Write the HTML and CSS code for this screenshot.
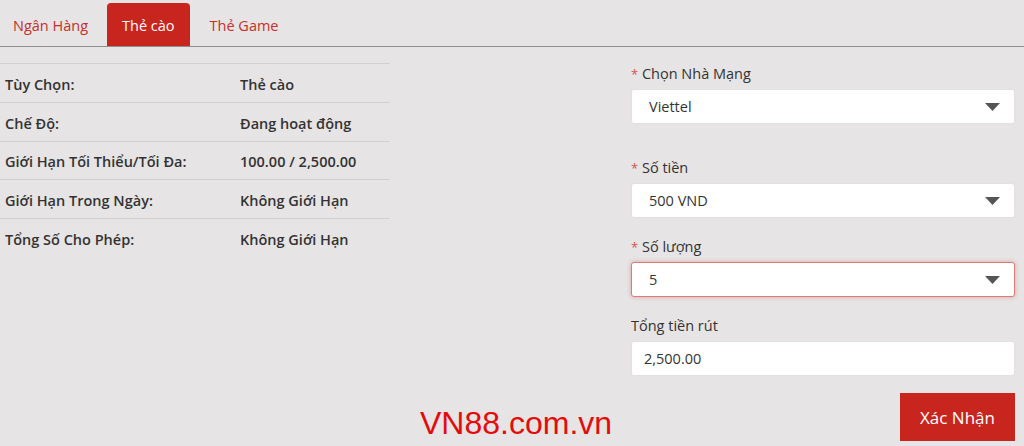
FILE: index.html
```html
<!DOCTYPE html>
<html lang="vi">
<head>
<meta charset="utf-8">
<title>Thẻ cào</title>
<link rel="stylesheet" href="styles.css">
</head>
<body>
<nav class="tabs">
  <a class="tab">Ngân Hàng</a>
  <a class="tab active">Thẻ cào</a>
  <a class="tab">Thẻ Game</a>
</nav>
<main class="content">
  <section class="info">
    <div class="row"><span class="k">Tùy Chọn:</span><span class="v">Thẻ cào</span></div>
    <div class="row"><span class="k">Chế Độ:</span><span class="v">Đang hoạt động</span></div>
    <div class="row"><span class="k">Giới Hạn Tối Thiểu/Tối Đa:</span><span class="v">100.00 / 2,500.00</span></div>
    <div class="row"><span class="k">Giới Hạn Trong Ngày:</span><span class="v">Không Giới Hạn</span></div>
    <div class="row"><span class="k">Tổng Số Cho Phép:</span><span class="v">Không Giới Hạn</span></div>
  </section>
  <section class="form">
    <div class="group g1">
      <label class="label"><span class="req">*</span> Chọn Nhà Mạng</label>
      <div class="select"><span>Viettel</span><svg class="caret" viewBox="0 0 15 8"><path d="M0 0H15L7.5 8Z"/></svg></div>
    </div>
    <div class="group">
      <label class="label"><span class="req">*</span> Số tiền</label>
      <div class="select"><span>500 VND</span><svg class="caret" viewBox="0 0 15 8"><path d="M0 0H15L7.5 8Z"/></svg></div>
    </div>
    <div class="group">
      <label class="label"><span class="req">*</span> Số lượng</label>
      <div class="select focus"><span>5</span><svg class="caret" viewBox="0 0 15 8"><path d="M0 0H15L7.5 8Z"/></svg></div>
    </div>
    <div class="group">
      <label class="label">Tổng tiền rút</label>
      <div class="input">2,500.00</div>
    </div>
    <div class="actions"><button class="btn">Xác Nhận</button></div>
  </section>
</main>
<div class="watermark">VN88.com.vn</div>
</body>
</html>
```
FILE: styles.css
```css
html, body {
  margin: 0;
  padding: 0;
  background: #e6e4e4;
  font-family: "Open Sans", "Noto Sans", sans-serif;
  color: #333;
  height: 446px;
  overflow: hidden;
}
.tabs {
  display: flex;
  padding-top: 3px;
  border-bottom: 1px solid #8e8e8e;
  height: 43px;
}
.tab {
  display: flex;
  align-items: center;
  padding: 2px 15px 0;
  font-size: 14.5px;
  color: #c4302a;
  border-radius: 4px 4px 0 0;
}
.tab:first-child { padding: 2px 19px 0 13px; }
.tab:last-child { padding-left: 20px; }
.tab.active {
  background: #c9251f;
  color: #fff;
}
.content {
  display: flex;
  justify-content: space-between;
  padding: 16px 9px 0 0;
}
.info {
  width: 390px;
}
.row {
  display: flex;
  align-items: center;
  box-sizing: border-box;
  height: 38.75px;
  padding-top: 3px;
  border-top: 1px solid #d2d0d0;
  font-size: 14.5px;
  font-weight: 600;
  color: #333;
}
.k { width: 235px; padding-left: 5px; }
.form {
  width: 384px;
  display: flex;
  flex-direction: column;
}
.group { margin-bottom: 18px; }
.group.g1 { margin-bottom: 33px; }
.label {
  display: block;
  font-size: 14.5px;
  line-height: 20px;
  padding-top: 1px;
  margin-bottom: 5px;
  color: #333;
}
.req { color: #d9534f; font-size: 13px; }
.select, .input {
  box-sizing: border-box;
  height: 35px;
  background: #fff;
  border: 1px solid #e2e0e0;
  border-radius: 3px;
  display: flex;
  align-items: center;
  font-size: 14.5px;
}
.select {
  justify-content: space-between;
  padding: 0 14px 0 17px;
}
.input { padding: 0 12px; }
.select.focus {
  border-color: #dc7b78;
  box-shadow: 0 0 4px rgba(210, 80, 75, 0.45);
}
.caret { width: 15px; height: 8px; fill: #555; }
.actions {
  display: flex;
  justify-content: flex-end;
  margin-top: -1px;
}
.btn {
  width: 115px;
  height: 48px;
  border: 0;
  border-radius: 0;
  background: #c9251f;
  color: #fff;
  font-family: "Open Sans", "Noto Sans", sans-serif;
  font-size: 17px;
}
.watermark {
  position: absolute;
  left: 420px;
  top: 405px;
  font-family: "Liberation Sans", Arial, sans-serif;
  font-size: 32px;
  color: #e50b0b;
}
```
